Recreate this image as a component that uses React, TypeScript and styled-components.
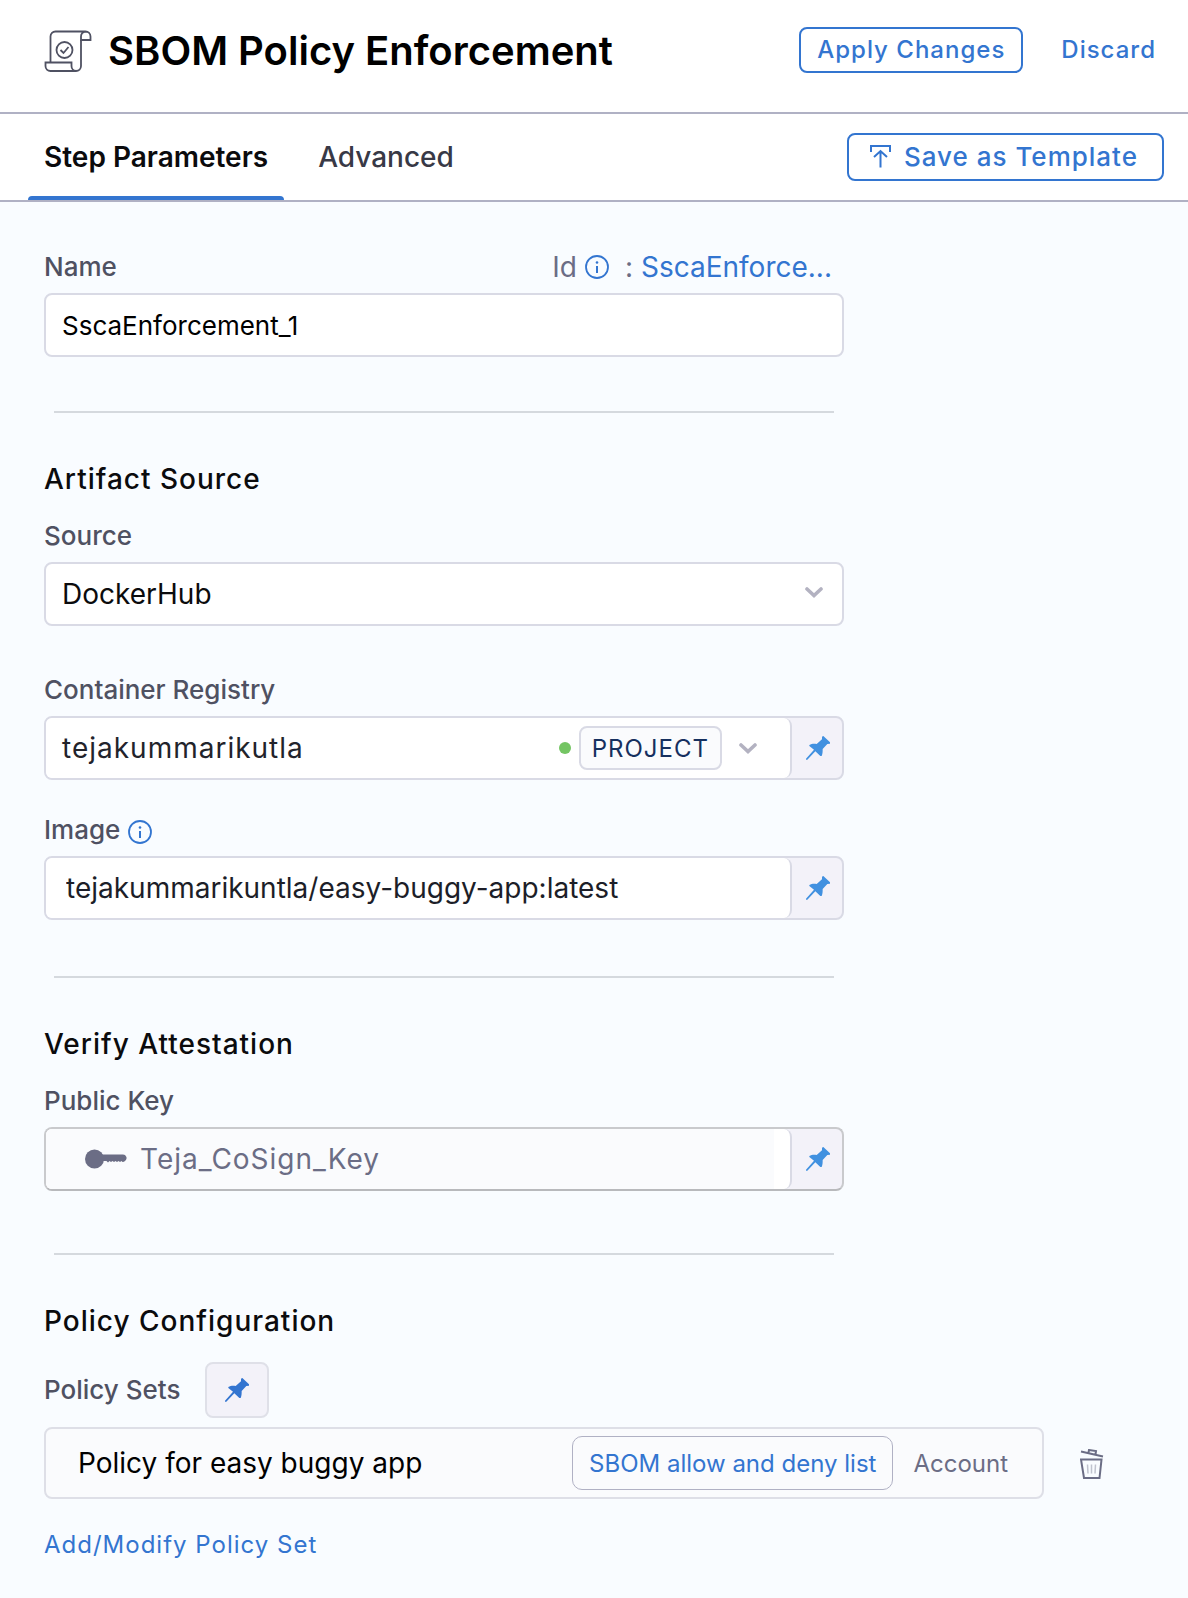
import React from "react";
import styled, { createGlobalStyle } from "styled-components";

const color = {
  primary: "#3375d0",
  pin: "#4191e0",
  text: "#0b0b0d",
  label: "#4f5162",
  muted: "#6b6d85",
  border: "#d9dae5",
  headerBorder: "#b0b1c4",
  divider: "#d5d9de",
  canvas: "#f9fcff",
  readOnly: "#fafbfd",
  pinSurface: "#f3f2f9",
};

const GlobalStyle = createGlobalStyle`
  *, *::before, *::after { box-sizing: border-box; }
  body {
    margin: 0;
    min-height: 100vh;
    background: ${color.canvas};
    font-family: Inter, "Liberation Sans", sans-serif;
    color: ${color.text};
  }
  button, input, select { font-family: inherit; margin: 0; }
  svg { display: block; flex: none; }
`;

const Header = styled.header`
  display: flex;
  align-items: flex-start;
  justify-content: space-between;
  padding: 27px 32px 37px 44px;
  background: #fff;
  border-bottom: 2px solid ${color.headerBorder};
`;

const TitleGroup = styled.div`
  display: flex;
  align-items: center;
  gap: 16px;
`;

const Title = styled.h1`
  margin: 0;
  font-size: 40px;
  font-weight: 600;
  line-height: 48px;
  color: #000;
`;

const HeaderActions = styled.div`
  display: flex;
  align-items: center;
  gap: 38px;
`;

const OutlineButton = styled.button<{ $large?: boolean }>`
  display: flex;
  align-items: center;
  gap: 12px;
  height: ${(p) => (p.$large ? 48 : 46)}px;
  padding: ${(p) => (p.$large ? "0 24px 2px 20px" : "0 16px 2px")};
  border: 2px solid ${color.primary};
  border-radius: 8px;
  background: #fff;
  color: ${color.primary};
  font-size: ${(p) => (p.$large ? 26 : 24)}px;
  font-weight: 500;
  letter-spacing: 1px;
  cursor: pointer;
`;

const TextButton = styled.button`
  padding: 0 0 2px;
  border: 0;
  background: none;
  color: ${color.primary};
  font-size: 24px;
  font-weight: 500;
  letter-spacing: 1px;
  cursor: pointer;
`;

const TabBar = styled.div`
  display: flex;
  align-items: center;
  justify-content: space-between;
  height: 88px;
  padding: 0 24px 0 28px;
  background: #fff;
  border-bottom: 2px solid ${color.headerBorder};
`;

const Tabs = styled.div`
  display: flex;
  align-self: stretch;
  gap: 18px;
`;

const Tab = styled.button<{ $active?: boolean }>`
  display: flex;
  flex-direction: column;
  justify-content: space-between;
  padding: 26px 0 0;
  border: 0;
  background: none;
  color: ${(p) => (p.$active ? color.text : "#383946")};
  font-size: 28px;
  font-weight: ${(p) => (p.$active ? 600 : 500)};
  line-height: 34px;
  cursor: pointer;

  span { padding: 0 16px; }

  &::after {
    content: "";
    height: 4px;
    align-self: stretch;
    border-radius: 4px 4px 0 0;
    background: ${(p) => (p.$active ? color.primary : "transparent")};
  }
`;

const Content = styled.main`
  padding: 49px 44px 39px;
`;

const Section = styled.section<{ $bottom?: number }>`
  max-width: 800px;
  padding-bottom: ${(p) => p.$bottom ?? 0}px;
`;

const PolicySection = styled.section`
  max-width: 1060px;
`;

const Divider = styled.hr`
  max-width: 780px;
  height: 2px;
  margin: 0 0 49px 10px;
  border: 0;
  background: ${color.divider};
`;

const SectionTitle = styled.h2`
  margin: 0 0 24px;
  font-size: 28px;
  font-weight: 500;
  line-height: 34px;
  letter-spacing: 1px;
`;

const Field = styled.div<{ $bottom?: number }>`
  display: flex;
  flex-direction: column;
  gap: 10px;
  margin-bottom: ${(p) => p.$bottom ?? 0}px;
`;

const LabelRow = styled.div`
  display: flex;
  align-items: center;
  justify-content: space-between;
  height: 32px;
`;

const LabelGroup = styled.div`
  display: flex;
  align-items: center;
  gap: 8px;

  button { padding-top: 4px; }
`;

const labelFont = `
  color: ${color.label};
  font-size: 26px;
  font-weight: 500;
  line-height: 32px;
`;

const Label = styled.label`${labelFont}`;
const LabelText = styled.span`${labelFont}`;

const Identifier = styled.div`
  display: flex;
  align-items: center;
  gap: 8px;
  padding-right: 12px;
  color: ${color.muted};
  font-size: 28px;
  line-height: 34px;
`;

const IdentifierValue = styled.span`
  padding-left: 8px;

  b {
    padding-left: 8px;
    color: ${color.primary};
    font-weight: 400;
  }
`;

const InfoButton = styled.button`
  padding: 0;
  border: 0;
  background: none;
  color: ${color.primary};
  cursor: pointer;
`;

const Control = styled.div<{ $outset?: boolean }>`
  position: relative;
  display: flex;
  height: 64px;
  overflow: hidden;
  border: 2px solid ${(p) => (p.$outset ? "#c9cacd" : color.border)};
  border-bottom-color: ${(p) => (p.$outset ? "#b8b9bc" : color.border)};
  border-radius: 8px;
  background: #fff;
`;

const PinnedControl = styled(Control)`
  background: ${color.pinSurface};
`;

const ControlBody = styled.div`
  display: flex;
  flex: 1;
  min-width: 0;
  border-right: 2px solid ${color.border};
  border-radius: 0 8px 8px 0;
  background: #fff;
`;

const TextInput = styled.input<{ $size?: number; $indent?: number }>`
  flex: 1;
  min-width: 0;
  padding: 0 ${(p) => p.$indent ?? 16}px;
  border: 0;
  outline: 0;
  background: transparent;
  color: ${(p) => (p.$size ? "#1c1e28" : "#000")};
  font-size: ${(p) => p.$size ?? 26}px;
`;

const Select = styled.select`
  flex: 1;
  min-width: 0;
  padding: 0 64px 0 16px;
  border: 0;
  outline: 0;
  appearance: none;
  background: transparent;
  color: ${color.text};
  font-size: 28px;
`;

const SelectArrow = styled.span`
  position: absolute;
  top: 23px;
  right: 19px;
  pointer-events: none;
`;

const RegistryPicker = styled.button`
  display: flex;
  flex: 1;
  align-items: center;
  min-width: 0;
  padding: 0 33px 0 16px;
  border: 0;
  background: none;
  color: #22232b;
  font-size: 28px;
  letter-spacing: 1px;
  text-align: left;
  cursor: pointer;
`;

const RegistryName = styled.span`
  flex: 1;
`;

const StatusDot = styled.span`
  width: 12px;
  height: 12px;
  margin-right: 8px;
  border-radius: 50%;
  background: #74c563;
`;

const ScopeTag = styled.span`
  display: flex;
  align-items: center;
  height: 44px;
  margin-right: 17px;
  padding: 0 11px;
  border: 2px solid ${color.border};
  border-radius: 8px;
  background: ${color.readOnly};
  color: #16305f;
  font-size: 24px;
`;

const KeyPicker = styled.button`
  display: flex;
  flex: 1;
  align-items: center;
  gap: 13px;
  margin-right: 16px;
  padding: 0 39px;
  border: 0;
  background: ${color.readOnly};
  color: ${color.muted};
  font-size: 28px;
  letter-spacing: 1px;
  cursor: pointer;
`;

const PinButton = styled.button`
  display: grid;
  place-items: center;
  width: 50px;
  padding: 0 0 0 2px;
  border: 0;
  background: none;
  color: ${color.pin};
  cursor: pointer;
`;

const FramedPinButton = styled(PinButton)`
  width: 64px;
  height: 56px;
  padding: 0;
  border: 2px solid #dfe0e8;
  border-radius: 8px;
  background: ${color.pinSurface};
  color: ${color.primary};
`;

const PolicyLabelRow = styled.div`
  display: flex;
  align-items: center;
  gap: 25px;
  margin-bottom: 9px;
`;

const PolicyRow = styled.div`
  display: flex;
  align-items: center;
  gap: 36px;
  margin-bottom: 31px;
`;

const PolicyCard = styled.div`
  display: flex;
  flex: 1;
  align-items: center;
  height: 72px;
  padding: 0 34px 0 32px;
  border: 2px solid #dedfe7;
  border-radius: 8px;
  background: ${color.readOnly};
`;

const PolicyName = styled.span`
  flex: 1;
  color: #000;
  font-size: 28px;
`;

const PolicyTag = styled.span`
  display: flex;
  align-items: center;
  height: 54px;
  margin-right: 20px;
  padding: 0 16px;
  border: 1px solid ${color.headerBorder};
  border-radius: 10px;
  color: ${color.primary};
  font-size: 24px;
`;

const PolicyScope = styled.span`
  color: ${color.muted};
  font-size: 24px;
`;

const IconButton = styled.button`
  padding: 2px 0 0;
  border: 0;
  background: none;
  color: ${color.muted};
  cursor: pointer;
`;

const Link = styled.a`
  color: ${color.primary};
  font-size: 24px;
  line-height: 30px;
  letter-spacing: 1px;
  text-decoration: none;
`;

const PolicyIcon = () => (
  <svg width="48" height="42" viewBox="0 0 48 42" fill="none" stroke="#4f5162" strokeWidth="1.8" aria-hidden="true">
    <path d="M6.5 32.5V6.5a5 5 0 0 1 5-5h30a5 5 0 0 1 5 5V10H37V6.5a5 5 0 0 1 4.500-5" />
    <path d="M37 10v26a5 5 0 0 1-5 5H6.500a5 5 0 0 1-5-5v-3.500h26V36a5 5 0 0 0 4.500 5" />
    <circle cx="20.5" cy="20" r="8" />
    <path d="m16.5 20 3 3 5-6" />
  </svg>
);

const UploadIcon = () => (
  <svg width="23" height="24" viewBox="0 0 23 24" fill="none" stroke="currentColor" strokeWidth="2" aria-hidden="true">
    <path d="M2 8V2h19v6M11.5 23.5V7M5 13l6.5-6 6.5 6" />
  </svg>
);

const InfoIcon = () => (
  <svg width="24" height="24" viewBox="0 0 24 24" fill="none" stroke="currentColor" strokeWidth="1.8" aria-hidden="true">
    <circle cx="12" cy="12" r="11" />
    <path d="M12 11v7" strokeWidth="2" />
    <circle cx="12" cy="7.5" r="1.3" fill="currentColor" stroke="none" />
  </svg>
);

const ChevronIcon = () => (
  <svg width="18" height="11" viewBox="0 0 18 11" fill="none" stroke="#b3b2c1" strokeWidth="3.6" strokeLinecap="round" aria-hidden="true">
    <path d="m2 2 7 6.5L16 2" />
  </svg>
);

const PinIcon = () => (
  <svg width="24" height="24" viewBox="0 0 72 72" fill="currentColor" aria-hidden="true">
    <path d="M48 2 52 0l20 19v4l-8 1-14 15c0 8 0 14-3 21h-4L28 46 4 71H0v-3l24-27-14-11v-3c7-4 14-4 22-3l16-14z" />
  </svg>
);

const KeyIcon = () => (
  <svg width="42" height="20" viewBox="0 0 42 20" fill="currentColor" aria-hidden="true">
    <circle cx="9.5" cy="10" r="9.5" />
    <path d="M16 5.500h22a3.500 3.500 0 0 1 2.500 6c-1 1-2 1.500-3 1.500l-1-1-1.500 1-1.500-1-1.500 1-1.500-1-1.500 1-1.500-1-1.500 1-1.500-1-1.500 1.500-1.500-1.500H16z" />
  </svg>
);

const TrashIcon = () => (
  <svg width="24" height="30" viewBox="0 0 24 30" fill="none" stroke="currentColor" strokeWidth="2" aria-hidden="true">
    <path d="m1 2.500 22 5M8.500 3.500 9 1l7 1-.5 3.500M1 10.500h20.500L19.500 29H4z" />
    <path d="m7.500 15.500.5 9M11.500 15.500v9M15.500 15.500l-.5 9" strokeWidth="1.500" opacity=".4" />
  </svg>
);

export default function App() {
  return (
    <>
      <GlobalStyle />
      <Header>
        <TitleGroup>
          <PolicyIcon />
          <Title>SBOM Policy Enforcement</Title>
        </TitleGroup>
        <HeaderActions>
          <OutlineButton type="button">Apply Changes</OutlineButton>
          <TextButton type="button">Discard</TextButton>
        </HeaderActions>
      </Header>
      <TabBar>
        <Tabs role="tablist">
          <Tab type="button" role="tab" aria-selected="true" $active><span>Step Parameters</span></Tab>
          <Tab type="button" role="tab" aria-selected="false"><span>Advanced</span></Tab>
        </Tabs>
        <OutlineButton type="button" $large>
          <UploadIcon />
          Save as Template
        </OutlineButton>
      </TabBar>
      <Content>
        <Section $bottom={54}>
          <Field>
            <LabelRow>
              <Label htmlFor="name">Name</Label>
              <Identifier>
                Id
                <InfoButton type="button" aria-label="About the id"><InfoIcon /></InfoButton>
                <IdentifierValue>:<b>SscaEnforce...</b></IdentifierValue>
              </Identifier>
            </LabelRow>
            <Control>
              <TextInput id="name" type="text" defaultValue="SscaEnforcement_1" />
            </Control>
          </Field>
        </Section>

        <Divider />
        <Section $bottom={56}>
          <SectionTitle>Artifact Source</SectionTitle>
          <Field $bottom={48}>
            <Label htmlFor="source">Source</Label>
            <Control>
              <Select id="source" defaultValue="DockerHub">
                <option>DockerHub</option>
              </Select>
              <SelectArrow><ChevronIcon /></SelectArrow>
            </Control>
          </Field>
          <Field $bottom={34}>
            <LabelText id="registry-label">Container Registry</LabelText>
            <PinnedControl>
              <ControlBody>
                <RegistryPicker type="button" aria-haspopup="dialog" aria-describedby="registry-label">
                  <RegistryName>tejakummarikutla</RegistryName>
                  <StatusDot />
                  <ScopeTag>PROJECT</ScopeTag>
                  <ChevronIcon />
                </RegistryPicker>
              </ControlBody>
              <PinButton type="button" aria-label="Container registry value type"><PinIcon /></PinButton>
            </PinnedControl>
          </Field>
          <Field>
            <LabelGroup>
              <Label htmlFor="image">Image</Label>
              <InfoButton type="button" aria-label="About the image"><InfoIcon /></InfoButton>
            </LabelGroup>
            <PinnedControl>
              <ControlBody>
                <TextInput id="image" type="text" $size={28} $indent={20} defaultValue="tejakummarikuntla/easy-buggy-app:latest" />
              </ControlBody>
              <PinButton type="button" aria-label="Image value type"><PinIcon /></PinButton>
            </PinnedControl>
          </Field>
        </Section>

        <Divider />
        <Section $bottom={62}>
          <SectionTitle>Verify Attestation</SectionTitle>
          <Field>
            <LabelText id="key-label">Public Key</LabelText>
            <PinnedControl $outset>
              <ControlBody>
                <KeyPicker type="button" aria-haspopup="dialog" aria-describedby="key-label">
                  <KeyIcon />
                  Teja_CoSign_Key
                </KeyPicker>
              </ControlBody>
              <PinButton type="button" aria-label="Public key value type"><PinIcon /></PinButton>
            </PinnedControl>
          </Field>
        </Section>

        <Divider />
        <PolicySection>
          <SectionTitle>Policy Configuration</SectionTitle>
          <PolicyLabelRow>
            <LabelText>Policy Sets</LabelText>
            <FramedPinButton type="button" aria-label="Policy sets value type"><PinIcon /></FramedPinButton>
          </PolicyLabelRow>
          <PolicyRow>
            <PolicyCard>
              <PolicyName>Policy for easy buggy app</PolicyName>
              <PolicyTag>SBOM allow and deny list</PolicyTag>
              <PolicyScope>Account</PolicyScope>
            </PolicyCard>
            <IconButton type="button" aria-label="Remove policy set"><TrashIcon /></IconButton>
          </PolicyRow>
          <Link href="#policy-sets">Add/Modify Policy Set</Link>
        </PolicySection>
      </Content>
    </>
  );
}
